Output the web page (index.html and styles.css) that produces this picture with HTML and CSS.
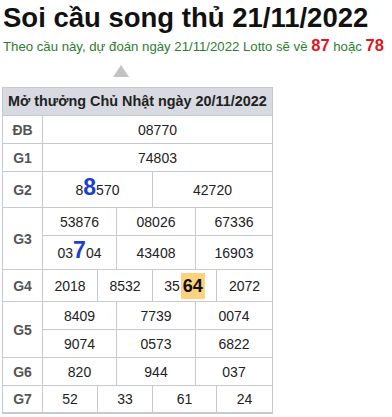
FILE: index.html
```html
<!DOCTYPE html>
<html lang="vi">
<head>
<meta charset="utf-8">
<title>Soi cầu song thủ 21/11/2022</title>
<link rel="stylesheet" href="styles.css">
</head>
<body>
<h1 class="title">Soi cầu song thủ 21/11/2022</h1>
<p class="predict">Theo cầu này, dự đoán ngày 21/11/2022 Lotto sẽ về <b class="red">87</b> hoặc <b class="red">78</b></p>
<div class="arrow-wrap"><span class="arrow"></span></div>
<div class="kq">
  <div class="head">Mở thưởng Chủ Nhật ngày 20/11/2022</div>
  <div class="row">
    <div class="label">ĐB</div>
    <div class="cells c1"><div class="cell">08770</div></div>
  </div>
  <div class="row">
    <div class="label">G1</div>
    <div class="cells c1"><div class="cell">74803</div></div>
  </div>
  <div class="row">
    <div class="label">G2</div>
    <div class="cells c2 tall35">
      <div class="cell">8<b class="blue">8</b>570</div>
      <div class="cell">42720</div>
    </div>
  </div>
  <div class="row">
    <div class="label">G3</div>
    <div class="sub">
      <div class="cells c3">
        <div class="cell">53876</div>
        <div class="cell">08026</div>
        <div class="cell">67336</div>
      </div>
      <div class="cells c3 tall33">
        <div class="cell">03<b class="blue">7</b>04</div>
        <div class="cell">43408</div>
        <div class="cell">16903</div>
      </div>
    </div>
  </div>
  <div class="row">
    <div class="label">G4</div>
    <div class="cells c4 tall31">
      <div class="cell">2018</div>
      <div class="cell">8532</div>
      <div class="cell">35 <b class="hl">64</b></div>
      <div class="cell">2072</div>
    </div>
  </div>
  <div class="row">
    <div class="label">G5</div>
    <div class="sub">
      <div class="cells c3">
        <div class="cell">8409</div>
        <div class="cell">7739</div>
        <div class="cell">0074</div>
      </div>
      <div class="cells c3">
        <div class="cell">9074</div>
        <div class="cell">0573</div>
        <div class="cell">6822</div>
      </div>
    </div>
  </div>
  <div class="row">
    <div class="label">G6</div>
    <div class="cells c3">
      <div class="cell">820</div>
      <div class="cell">944</div>
      <div class="cell">037</div>
    </div>
  </div>
  <div class="row last">
    <div class="label">G7</div>
    <div class="cells c4">
      <div class="cell">52</div>
      <div class="cell">33</div>
      <div class="cell">61</div>
      <div class="cell">24</div>
    </div>
  </div>
</div>
</body>
</html>
```
FILE: styles.css
```css
html, body {
  margin: 0;
  padding: 0;
  background: #fff;
}
body {
  font-family: "Liberation Sans", Arial, sans-serif;
  color: #222;
  padding: 2px 0 0 3px;
}
.title {
  margin: 0;
  font-size: 27.5px;
  line-height: 32px;
  font-weight: bold;
  color: #111;
}
.predict {
  margin: 3px 0 0 0;
  font-size: 13.2px;
  line-height: 20px;
  height: 20px;
  color: #2e7d2e;
  white-space: nowrap;
}
.red {
  color: #e2131a;
  font-size: 16.5px;
  line-height: 1;
}
.arrow-wrap {
  height: 30px;
  padding-left: 110px;
  padding-top: 8px;
  box-sizing: border-box;
}
.arrow {
  display: block;
  width: 0;
  height: 0;
  border-left: 8px solid transparent;
  border-right: 8px solid transparent;
  border-bottom: 12px solid #c2c2c2;
}
.kq {
  margin-left: -1px;
  width: 271px;
  box-sizing: border-box;
  border-left: 1px solid #c6c9d0;
  border-right: 1px solid #c6c9d0;
  border-top: 1px solid #c6c9d0;
  border-bottom: 2px solid #c6c9d0;
  font-size: 14px;
}
.head {
  background: #d7dae1;
  height: 27px;
  line-height: 27px;
  font-weight: bold;
  color: #222;
  padding-left: 5px;
  font-size: 14.4px;
  white-space: nowrap;
}
.row {
  display: grid;
  grid-template-columns: 40px 1fr;
  border-top: 1px solid #c6c9d0;
}
.label {
  border-right: 1px solid #c6c9d0;
  display: flex;
  align-items: center;
  justify-content: center;
  font-weight: bold;
  color: #555;
  font-size: 14px;
}
.sub > .cells + .cells {
  border-top: 1px solid #c6c9d0;
}
.cells {
  display: grid;
  height: 27px;
}
.row.last .cells {
  height: 26px;
}
.c1 { grid-template-columns: 1fr; }
.c2 { grid-template-columns: 109px 1fr; }
.c3 { grid-template-columns: 73px 79px 1fr; }
.c4 { grid-template-columns: 54px 55px 64px 1fr; }
.tall35 { height: 35px; }
.tall33 { height: 33px; }
.tall31 { height: 31px; }
.cell {
  display: flex;
  align-items: center;
  justify-content: center;
  color: #222;
  white-space: nowrap;
}
.cell + .cell {
  border-left: 1px solid #c6c9d0;
}
.blue {
  color: #1a3fd6;
  font-size: 23px;
  line-height: 1;
  position: relative;
  top: -2px;
}
.hl {
  background: #fdd27f;
  color: #111;
  font-size: 18px;
  line-height: 26px;
  padding: 0 2px;
  margin-left: 1px;
}
```
